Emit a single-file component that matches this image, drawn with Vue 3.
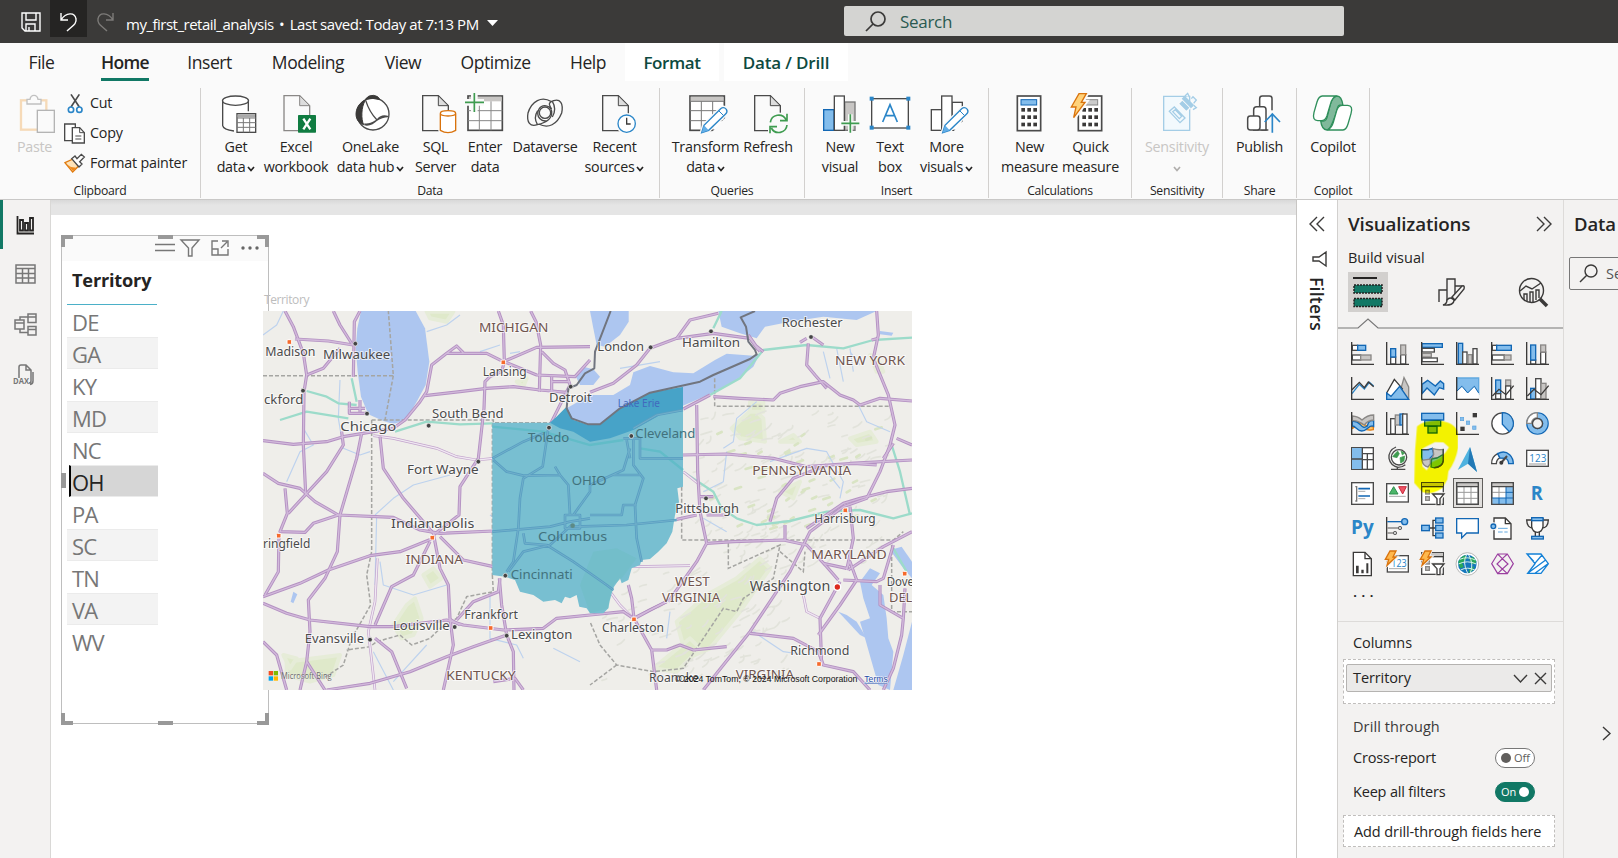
<script setup>
const D = '#4a4a4a', B = '#2b86c8', L = '#83bdec', G = '#3f9c50', K = '#3b3a39', N = '#1267b4', S = '#c8c6c4'

const docPath = (x) => `<path d="M${x} 8H${x + 47}L${x + 77} 38V113H${x}z" fill="#fafafa" stroke="${D}" stroke-width="4"/><path d="M${x + 47} 8V38H${x + 77}z" fill="#ddd" stroke="${D}" stroke-width="3"/>`
const pencil = `<path d="M47 119L54 97 104 47Q113 40 121 49 126 57 118 64L68 112z" fill="#fff" stroke="#fafafa" stroke-width="12"/><path d="M47 119L54 97 104 47Q113 40 121 49 126 57 118 64L68 112z" fill="#fff" stroke="${B}" stroke-width="4"/><path d="M47 119L54 97 68 112z" fill="#62aee8"/><path d="M98 53L112 67" stroke="${B}" stroke-width="3"/>`
const keys = [45, 67, 89].map(y => [34, 52, 70].map(x => `<rect x="${x}" y="${y}" width="11" height="11" fill="${K}"/>`).join('')).join('')
const calc = (hue, line) => `<rect x="22" y="9" width="70" height="104" fill="#fff" stroke="${D}" stroke-width="5"/><rect x="33" y="20" width="47" height="16" fill="${hue}" stroke="${line}" stroke-width="3"/>${keys}`
const bolt = (t = '') => `<path ${t} d="M24 2H46L31 28H42L8 74 15 42H1z" fill="#ffd27a" stroke="#d9730d" stroke-width="4"/>`

const ribbonIcons = {
  paste: `<g opacity=".38"><rect x="9" y="22" width="76" height="88" fill="#fff" stroke="#f0a950" stroke-width="7"/><path d="M27 33V19H36Q38 7 48 7T60 19H69V33z" fill="#fff" stroke="#666" stroke-width="4"/></g><rect x="58" y="52" width="51" height="66" fill="#fafafa" stroke="#b4b4b4" stroke-width="4"/>`,
  getdata: `<path d="M20 24V98Q22 112 60 114V60H98V24" fill="#fff"/><path d="M20 24V98Q22 110 54 114M97 24V55" fill="none" stroke="${D}" stroke-width="4"/><ellipse cx="58.500" cy="23" rx="39" ry="14" fill="#fff" stroke="${D}" stroke-width="4"/><rect x="63" y="62" width="56" height="56" fill="#fff" stroke="${D}" stroke-width="4"/><rect x="65" y="64" width="52" height="9" fill="#aaa"/><path d="M63 75H119M63 89H119M63 103H119M82 75V118M101 75V118" stroke="#777" stroke-width="3"/>`,
  excel: `${docPath(24).replaceAll(D, '#8a8886')}<rect x="66" y="66" width="54" height="53" fill="#107c41" rx="2"/><path d="M82 77L103 109M103 77L82 109" stroke="#fff" stroke-width="7"/>`,
  onelake: `<circle cx="66" cy="63" r="48" fill="#fff" stroke="${D}" stroke-width="4"/><path d="M43 19Q52 6 67 7 82 8 87 20 66 13 43 19z" fill="${K}" stroke="${K}" stroke-width="3"/><path d="M43 22C12 32 2 84 38 95 30 80 30 42 43 22z" fill="${K}" stroke="${K}" stroke-width="3"/><path d="M44 22Q55 57 78 81M40 93C68 99 78 70 112 71M40 95Q60 100 80 79 92 64 112 71" fill="none" stroke="${D}" stroke-width="4"/>`,
  sql: `${docPath(20)}<path d="M73 62V112Q96 126 119 112V62" fill="#fff" stroke="#fafafa" stroke-width="12"/><path d="M73 62V112Q96 126 119 112V62" fill="#fff" stroke="#d9730d" stroke-width="4"/><ellipse cx="96" cy="61" rx="23" ry="8" fill="#fff" stroke="#d9730d" stroke-width="4"/>`,
  enter: `<rect x="9" y="9" width="103" height="103" fill="#fff" stroke="${D}" stroke-width="5"/><rect x="12" y="11" width="98" height="14" fill="#c8c6c4"/><path d="M9 53H112M9 83H112M43 25V112M78 25V112" stroke="#888" stroke-width="3"/><path d="M0 28H57M28 0V57" stroke="#fafafa" stroke-width="20"/><path d="M0 28H57M28 0V57" stroke="${G}" stroke-width="5"/>`,
  dataverse: `<g fill="none" stroke="${D}" stroke-width="4"><circle cx="60" cy="59" r="17"/><path d="M79 26C50 8 20 24 9 60 4 88 16 103 37 95 68 88 82 75 80 55 77 35 51 33 42 48 30 72 51 88 68 83M41 93C70 108 96 95 110 60 116 30 105 17 86 23 70 29 70 33 80 48"/><path d="M37 94Q25 74 38 53M82 25Q96 48 82 72"/></g>`,
  recent: `${docPath(23)}<circle cx="95" cy="92" r="32" fill="#fafafa"/><circle cx="95" cy="92" r="26" fill="#fff" stroke="${B}" stroke-width="4"/><path d="M95 74V93H107" fill="none" stroke="${K}" stroke-width="4"/>`,
  transform: `<rect x="12" y="9" width="103" height="103" fill="#fff" stroke="${D}" stroke-width="5"/><rect x="14" y="11" width="98" height="14" fill="#c8c6c4"/><path d="M12 25H115M12 53H115M12 83H115M46 25V112M80 25V112" stroke="#777" stroke-width="3"/><path d="M75 120L122 70V120z" fill="#fafafa"/>${pencil}`,
  refresh: `${docPath(20)}<rect x="60" y="59" width="64" height="62" fill="#fafafa"/><path d="M67 88A25 25 0 0 1 114 80M117 96A25 25 0 0 1 70 105M117 62V83H96M66 121V101H87" fill="none" stroke="${G}" stroke-width="5"/>`,
  newvisual: `<rect x="11" y="50" width="31" height="62" fill="${L}" stroke="${N}" stroke-width="4"/><rect x="74" y="27" width="31" height="85" fill="#c8c6c4" stroke="#777" stroke-width="4"/><rect x="43" y="9" width="30" height="103" fill="#fff" stroke="${D}" stroke-width="4"/><path d="M64 91H118M91 64V119" stroke="#fafafa" stroke-width="14"/><path d="M64 91H118M91 64V119" stroke="${G}" stroke-width="5"/>`,
  textbox: `<rect x="5" y="17" width="110" height="88" fill="#fff" stroke="${D}" stroke-width="4"/><g fill="${B}"><rect x="-1" y="11" width="12" height="12"/><rect x="109" y="11" width="12" height="12"/><rect x="-1" y="98" width="12" height="12"/><rect x="109" y="98" width="12" height="12"/></g><path d="M38 87L60 35 82 87M46 68H74" fill="none" stroke="${B}" stroke-width="5"/>`,
  morevisuals: `<g fill="#fff" stroke="${D}" stroke-width="4"><rect x="13" y="50" width="31" height="62"/><rect x="75" y="28" width="31" height="84"/><rect x="44" y="9" width="31" height="103"/></g><path d="M75 120L116 75V120z" fill="#fafafa"/>${pencil}`,
  newmeasure: calc(L, N),
  quick: `${calc('#ccc', '#888')}<path d="M24 2H46L31 28H42L8 74 15 42H1z" stroke="#fafafa" stroke-width="15"/>${bolt()}`,
  sensitivity: `<g stroke="#a4cde6" fill="#f2f9fd" stroke-width="4"><path d="M20 10H98V112H20z"/><path d="M64 32L76 20 100 44 88 56z" fill="#a4cde6" stroke="#fafafa"/><path d="M77 17L83 11 109 37 102 43z" fill="#a4cde6"/><path d="M84 9L92 1 97 12M103 17L108 11 118 21 110 31M110 37L118 44 108 50"/><path d="M37 55L52 42 84 75 69 89zM47 56L55 50 74 70 67 77z"/></g>`,
  publish: `<g fill="#fff" stroke="${D}" stroke-width="4.500"><rect x="59" y="9" width="37" height="102" rx="8"/><path d="M41 111V50Q41 41 50 41H70Q78 41 78 50V111z"/><rect x="23" y="69" width="37" height="42" rx="8"/></g><path d="M97 52V122" stroke="#fafafa" stroke-width="24"/><path d="M97 119V62M74 87L97 63 120 87" fill="none" stroke="${B}" stroke-width="5"/>`,
  copilot: `<g stroke="#2f8f5b" stroke-width="4" stroke-linejoin="round"><path d="M72 9Q86 9 90 38Q78 33 74 43L66 70C57 96 50 111 42 111Q26 110 23 83Q38 88 42 74L52 34Q58 10 72 9z" fill="#80b99b"/><path d="M28 9H70Q58 13 52 34L42 68Q37 83 25 83H14Q-3 83 3 58L12 27Q17 10 28 9z" fill="#fff"/><path d="M90 111H44Q56 105 61 88L72 50Q77 37 88 37H104Q121 38 114 62L105 93Q100 110 90 111z" fill="#fff"/></g>`
}

const clip = [
  { t: 'Cut', i: `<path d="M12 4L37 42M37 4L12 42" stroke="${D}" stroke-width="5"/><circle cx="12" cy="50" r="8" fill="#fff" stroke="${B}" stroke-width="5"/><circle cx="37" cy="50" r="8" fill="#fff" stroke="${B}" stroke-width="5"/>` },
  { t: 'Copy', i: `<path d="M-7 3H25V53H-7z" fill="#fff" stroke="${D}" stroke-width="4"/><path d="M16 14H38L52 29V60H16z" fill="#fff" stroke="${D}" stroke-width="4"/><path d="M38 14V29H52M25 39H43M25 48H43" fill="none" stroke="${D}" stroke-width="3"/>` },
  { t: 'Format painter', i: `<path d="M-6 29L18 18 34 40 17 57z" fill="#ffe3b8" stroke="#e07b10" stroke-width="4"/><path d="M2 35L12 42 28 44 18 54z" fill="#f08a1c"/><path d="M14 17L24 9 30 17 43 4 52 12 38 26 45 33 36 42z" fill="#fff" stroke="${D}" stroke-width="4"/>` }
]

const groups = [
  { name: 'Data', w: 459, pad: 10, b: [['getdata', 'Get', 'data', 50, 1], ['excel', 'Excel', 'workbook', 70], ['onelake', 'OneLake', 'data hub', 79, 1], ['sql', 'SQL', 'Server', 51], ['enter', 'Enter', 'data', 48], ['dataverse', 'Dataverse', '', 72], ['recent', 'Recent', 'sources', 67, 1]] },
  { name: 'Queries', w: 145, pad: 11, b: [['transform', 'Transform', 'data', 69, 1], ['refresh', 'Refresh', '', 56]] },
  { name: 'Insert', w: 184, pad: 10, b: [['newvisual', 'New', 'visual', 50], ['textbox', 'Text', 'box', 50], ['morevisuals', 'More', 'visuals', 63, 1]] },
  { name: 'Calculations', w: 143, pad: 9, b: [['newmeasure', 'New', 'measure', 63], ['quick', 'Quick', 'measure', 59]] },
  { name: 'Sensitivity', w: 91, pad: 0, off: true, b: [['sensitivity', 'Sensitivity', '', 90, 1]] },
  { name: 'Share', w: 74, pad: 0, b: [['publish', 'Publish', '', 73]] },
  { name: 'Copilot', w: 73, pad: 0, b: [['copilot', 'Copilot', '', 72]] }
]

const tabs = [['File', 28, 27], ['Home', 101, 48], ['Insert', 188, 43], ['Modeling', 271, 74], ['View', 384, 38], ['Optimize', 460, 71], ['Help', 570, 36]]
  .map(([t, x, w], i, a) => ({ t, w, gap: i ? x - a[i - 1][1] - a[i - 1][2] : x }))

const rows = ['DE', 'GA', 'KY', 'MD', 'NC', 'OH', 'PA', 'SC', 'TN', 'VA', 'WV']

// Visual gallery glyphs, drawn on a 69-unit square
const ax = `<path d="M2 0V67H69" fill="none" stroke="${K}" stroke-width="4"/>`
const r = (x, y, w, h, k) => `<rect x="${x}" y="${y}" width="${w}" height="${h}" fill="${{ b: L, g: S, w: '#fff' }[k]}" stroke="${{ b: N, g: '#8a8886', w: D }[k]}" stroke-width="4"/>`
const p = (d, c = K, f = 'none', w = 4) => `<path d="${d}" fill="${f}" stroke="${c}" stroke-width="${w}"/>`
const grid = (hd) => r(2, 2, 65, 65, 'w') + p('M2 31H67M2 49H67M24 14V67M45 14V67', '#999', 'none', 3) + `<rect x="4" y="4" width="61" height="9" fill="${hd}"/>` + p('M2 2H67V67H2zM2 14H67', D)
const matrix = r(2, 2, 65, 65, 'w') + `<rect x="4" y="4" width="61" height="9" fill="${S}"/><path d="M45 15H66V66H4V48H45z" fill="${L}"/>` + p('M2 31H45M24 14V48', '#999', 'none', 3) + p('M45 14V67M45 31H67M3 48H67M24 48V67', N, 'none', 3) + p('M2 2H67V67H2zM2 14H67', D)
const funnelF = p('M36 36H70L57 51V67H49V51z', '#f3f2f1', '#f3f2f1', 10) + p('M35 36H69L57 50V68H48V50z', K, '#fff')
const slicer = r(2, 2, 65, 65, 'w') + `<rect x="3" y="3" width="63" height="9" fill="${S}"/>` + p('M2 14H67') + r(14, 25, 11, 11, 'g') + r(14, 44, 11, 11, 'g') + funnelF
const sBolt = `<path d="M12 -3H30L21 15H30L3 40 8 22H-2z" fill="#ffb84d" stroke="#f3f2f1" stroke-width="9"/><path d="M12 -3H30L21 15H30L3 40 8 22H-2z" fill="#ffb84d" stroke="#d9730d" stroke-width="4"/>`
const t = (s, x, y, size, len, wt = 400) => `<text x="${x}" y="${y}" font-size="${size}" textLength="${len}" lengthAdjust="spacingAndGlyphs" fill="${B}" font-weight="${wt}">${s}</text>`
const gallery = [
  r(4, 10, 16, 15, 'w') + r(20, 10, 24, 15, 'b') + r(4, 39, 25, 15, 'w') + r(29, 39, 31, 15, 'g') + ax,
  r(14, 45, 15, 21, 'w') + r(14, 20, 15, 25, 'b') + r(44, 38, 15, 28, 'w') + r(44, 9, 15, 29, 'g') + ax,
  r(3, 5, 61, 11, 'b') + r(3, 19, 37, 11, 'w') + r(3, 34, 28, 11, 'g') + r(3, 48, 46, 11, 'w') + ax,
  r(7, 4, 13, 62, 'b') + r(20, 30, 13, 36, 'w') + r(36, 38, 12, 28, 'g') + r(51, 20, 12, 46, 'w') + ax,
  r(4, 10, 13, 15, 'w') + r(17, 10, 44, 15, 'b') + r(4, 39, 36, 15, 'w') + r(40, 39, 20, 15, 'g') + ax,
  r(14, 54, 15, 12, 'w') + r(14, 9, 15, 45, 'b') + r(44, 30, 15, 36, 'w') + r(44, 9, 15, 21, 'g') + ax,
  p('M3 50L25 22 40 36 55 16 68 27', B) + p('M3 38L25 16 40 32 52 15 68 29', K) + ax,
  p('M36 67L54 2 68 30V67z', '#8a8886', S) + p('M2 48L25 7 49 35 20 67 2 67z', K, '#fff') + p('M2 67V48L15 58 41 28 68 67z', N, L),
  p('M3 22L20 10 43 27 58 12 68 20V36L55 32 40 54 18 33 3 50z', N, L) + ax,
  p('M3 3H68V48L55 28 35 48 18 28 3 42z', '#62a9e0', L) + p('M3 42L18 28 35 48 55 28 68 48V66H3z', '#fff', '#fff', 0) + p('M3 42L18 28 35 48 55 28 68 48', N, 'none', 3) + ax,
  r(14, 9, 15, 41, 'b') + r(14, 50, 15, 16, 'w') + r(44, 9, 15, 18, 'g') + r(44, 27, 15, 39, 'w') + p('M4 57L24 37 45 53 68 26') + ax,
  r(14, 34, 15, 32, 'b') + r(29, 5, 16, 61, 'w') + r(45, 19, 15, 47, 'g') + p('M4 57L24 37 45 53 68 26') + ax,
  p('M4 49C24 35 38 61 67 53V43C45 50 28 20 4 35z', '#e07b10', '#ffc56b') + p('M4 28C30 24 30 57 49 42 54 22 64 26 68 27V43C55 35 50 57 32 57 18 57 15 42 4 42z', N, L) + p('M4 12Q21 13 33 24 49 9 68 9V24Q51 25 40 39 20 24 4 26z', '#8a8886', S) + ax,
  r(14, 20, 14, 46, 'w') + r(28, 9, 14, 30, 'g') + r(42, 6, 10, 33, 'b') + r(50, 6, 13, 60, 'w') + ax,
  r(2, 4, 66, 20, 'b') + r(11, 25, 48, 17, 'b') + r(21, 43, 27, 20, 'b') + '',
  `<rect x="50" y="3" width="13" height="13" fill="${K}"/><rect x="13" y="44" width="13" height="13" fill="${K}"/>` + [[13, 16], [31, 27], [50, 42]].map(a => `<rect x="${a[0]}" y="${a[1]}" width="10" height="10" fill="${L}" stroke="#5ba2dd" stroke-width="2"/>`).join('') + ax,
  `<circle cx="34.500" cy="34.500" r="32" fill="#fff" stroke="${D}" stroke-width="4"/>` + p('M34 2A32 32 0 0 1 55 59L34 37z', N, L),
  `<circle cx="34.500" cy="34.500" r="24" fill="none" stroke="${N}" stroke-width="20"/><circle cx="34.500" cy="34.500" r="24" fill="none" stroke="${L}" stroke-width="13"/>` + p('M34 2V17A17 17 0 0 0 17 34H2A32 32 0 0 1 34 2z', '#8a8886', '#fff') + `<circle cx="34.500" cy="34.500" r="15" fill="#f3f2f1" stroke="${D}" stroke-width="4"/>`,
  r(2, 2, 65, 65, 'w') + `<rect x="3" y="3" width="30" height="63" fill="${L}"/>` + p('M34 3V67M3 36H33M34 20H67M49 38V67M34 38H67M49 20V38', D),
  `<circle cx="39" cy="31" r="23" fill="#fff" stroke="${D}" stroke-width="4"/>` + p('M26 21L35 12 40 20 33 32 20 29zM42 32L56 27 54 42 44 48zM45 12L56 18 49 24z', G, G, 2) + p('M30 0Q7 10 9 34 13 55 36 61 48 61 58 53M34 61V67M15 67H58', D),
  p('M2 8Q22 10 34 4L38 22 27 34V43H8Q2 40 2 30z', N, L) + p('M36 5Q51 10 67 7V30L33 34 38 22z', '#8a8886', S) + p('M3 40L28 36V50L21 60Q5 56 3 40z', '#8a8886', S) + p('M67 7V22L48 33 32 36 30 60Q44 66 58 56 68 50 67 34z', '#2b7d3a', '#7ec78b') + p('M67 7V40Q65 60 40 62M2 8H24', D),
  `<path d="M42 0L5 69 36 50 63 75z" fill="#4fb2df"/><path d="M42 0L36 50 63 75z" fill="#2279b5"/>`,
  p('M2 50A32 32 0 0 1 20 20L27 32Q16 38 16 50z', D, '#fff') + p('M20 20Q40 9 56 23 67 34 67 50H53Q52 37 43 34L27 33z', N, L) + p('M30 48L48 27', D, 'none', 6) + `<circle cx="31" cy="47" r="6" fill="${K}"/>`,
  r(2, 10, 65, 48, 'w') + t('123', 10, 46, 35, 51) + p('M9 51H60', '#999', 'none', 3),
  r(2, 2, 65, 65, 'w') + p('M17 12V59M13 14H18M13 57H18', '#777') + p('M22 20H57M22 42H57', N, 'none', 5) + p('M22 28H43M22 50H43', '#aaa', 'none', 3),
  r(2, 5, 65, 55, 'w') + p('M10 36L23 14 36 36z', '#2f8d4d', '#4bb76a', 3) + p('M38 14H61L50 36z', '#c8293c', '#ef5666', 3) + p('M9 43H59', '#aaa', 'none', 3),
  slicer,
  grid(S),
  matrix,
  t('R', 14, 55, 60, 36, 700),
  t('Py', 0, 51, 58, 68, 700),
  ax + p('M4 14H50', N) + `<circle cx="56" cy="14" r="9" fill="${L}" stroke="${N}" stroke-width="4"/>` + p('M4 33H40M4 48H24', '#8a8886') + `<circle cx="42" cy="33" r="5" fill="#ccc" stroke="#666" stroke-width="3"/><circle cx="27" cy="48" r="5" fill="#ccc" stroke="#666" stroke-width="3"/>`,
  p('M25 33H40M44 10H36V56H44M36 33H44') + r(2, 25, 23, 16, 'b') + r(44, 3, 22, 15, 'b') + r(44, 25, 22, 16, 'b') + r(44, 48, 22, 15, 'b'),
  p('M2 5H67V48H32L17 63V48H2z', N, '#fff'),
  p('M9 3H43L60 20V66H9z', K, '#fff') + p('M43 3V20H60') + `<circle cx="7" cy="28" r="12" fill="#f3f2f1"/><circle cx="7" cy="28" r="7" fill="${L}" stroke="${N}" stroke-width="4"/>` + p('M21 34H50M21 45H35M40 45H50', '#62a9e0', 'none', 3),
  p('M17 9H2Q3 34 22 33M52 9H67Q66 34 47 33M28 45V59M40 45V59M20 61H49') + p('M17 5V29Q20 46 34 46T51 29V5z', K, '#fff') + r(17, 2, 34, 9, 'b') + r(17, 58, 35, 8, 'b'),
  p('M7 1H42L61 20V71H7z', K, '#fff') + p('M42 1V20H61', K) + `<path d="M15 41H23V64H15zM31 53H38V64H31zM46 34H52V64H46z" fill="${K}"/>`,
  r(4, 11, 63, 49, 'w') + t('123', 16, 44, 31, 46) + p('M9 50H60', '#aaa', 'none', 3) + sBolt,
  slicer + sBolt,
  `<circle cx="34" cy="36" r="34" fill="#fff" stroke="#b8b8b8" stroke-width="3"/><circle cx="34" cy="36" r="28" fill="#1677bc"/><path d="M7 31Q13 14 27 10L33 18 19 34 23 45 13 49zM51 14L61 28 57 37 45 35 39 20zM41 49L55 43 49 57 37 63z" fill="#28a85a"/><path d="M7 36Q34 23 61 36M11 22Q35 12 58 24M14 54Q35 43 56 54M32 8Q18 30 35 64M38 9Q54 35 43 63" stroke="#d7f0e6" stroke-width="3" fill="none"/>`,
  p('M20 6H49L67 35 49 65H20L2 35zM20 6L34 20 18 36 34 51 20 65M49 6L34 20 51 36 34 51 49 65', '#9b3fa0', 'none', 3.500),
  p('M3 6H45L67 35 45 64H5L27 35zM3 6L24 29M26 35L48 9M5 64L59 24M27 64L65 36', '#1481d6', '#fff')
]

// Map geometry in thirds of a pixel
const roads = ['M75 78L100 125 130 205 140 270 132 320 130 480 137 625', 'M105 162L205 168 280 180', 'M220 78L240 120 278 180', 'M300 78L283 110 280 275', 'M140 270L190 250 240 190', 'M9 467L100 478 200 470 250 455 340 440 400 430 435 405 480 350 500 320 515 240 560 205 590 183 610 203M560 205L680 205 730 230 830 187 990 185', 'M715 78L730 120 733 230 725 260 690 275 675 290 672 370 655 520 600 605 597 690 520 750', 'M495 332L600 320 680 310 760 305 840 315 920 322', 'M812 78L828 110 842 180 838 320', 'M845 200L880 235 915 255 930 300 905 350 870 420', 'M733 230L830 270 945 275 990 225', 'M875 275V320M875 290H930', 'M360 455L370 550 430 640 520 745 540 850 565 900 570 1000 580 1080 550 1215', 'M305 445L290 520 240 690 232 800 195 880 145 945 150 1040 140 1130 120 1215', 'M9 565L55 595 120 610 165 650 235 690 400 697 480 735 540 745 700 738', 'M75 610L82 685 60 740 135 742 160 715 235 690', 'M57 750L55 860 15 930', 'M85 685L200 560 250 480 245 440', 'M9 935L120 895 205 855 330 812 420 800 520 760', 'M9 955L80 985 150 1005 330 1025 400 1025 560 1005 610 1020 730 1035 850 1030 890 1000 990 990 1090 980 1120 1000 1170 975 1220 950', 'M345 1060L395 1100 440 1210', 'M9 1070L50 1110 80 1215', 'M140 1130L195 1215', 'M345 1020L395 905 460 870 510 770', 'M540 755L610 825 700 845', 'M720 880L715 920 640 950 590 1005', 'M718 880L725 960 740 1050 760 1100 762 1215', 'M740 1050L640 1085 560 1115 450 1160 330 1195 200 1215', 'M565 1000L600 1020M790 1215L765 1180 700 1190', 'M268 350V385H320M265 370H315M300 345L300 380', 'M1310 360L1313 560 1320 680 1340 775 1310 830 1225 950', 'M1269 510L1400 507 1540 520 1640 545 1780 535 1850 540M1770 535L1956 525', 'M1340 775L1420 770 1570 765 1640 780 1700 845 1735 885', 'M1360 335L1440 340 1540 345 1560 325 1620 305 1690 290 1740 330 1780 345 1800 360 1860 340 1956 348', 'M1850 78L1855 150 1840 220 1885 330 1905 420 1890 480 1860 560 1820 640 1750 665 1650 740 1630 780 1590 860 1550 920 1470 1040 1390 1140 1330 1215', 'M1645 175L1640 240 1665 270 1700 310', 'M1530 710L1550 640 1600 580 1700 540', 'M1770 665L1780 760 1760 855', 'M1470 1045L1600 1060 1675 1100 1690 1140 1780 1160 1830 1215', 'M1175 1095L1220 1095 1260 1080 1300 1095 1400 1085', 'M1765 855L1870 785 1956 740', 'M1750 885L1850 890 1870 880 1900 780', 'M1860 900V960L1930 1000 1925 1050 1900 1150 1870 1215M1930 1000L1935 910', 'M1640 730L1750 655 1800 640 1880 620 1956 610', 'M1575 720V765M1340 690L1400 690M1310 690L1250 703', 'M1105 900L1115 940 1122 1000 1175 1095 1190 1215', 'M1125 1000L1170 975 1220 950', 'M990 322L1060 295 1130 240 1170 190 1250 160 1360 145 1470 160 1495 195', 'M1250 160L1290 105 1375 85', 'M1465 150L1500 200M1485 180L1510 200', 'M1350 330L1270 372', 'M1640 160L1620 172M1655 155L1690 180M1855 160L1835 165M1320 635H1360', 'M1910 460L1956 480M1870 520L1900 475', 'M1685 1140L1680 1000 1740 890', 'M1690 835L1760 850 1770 830 1790 885 1740 960 1675 1050']
const thin = ['M340 452L400 460 530 490 590 515 650 525 700 520', 'M352 820L345 950 325 1040 345 1215', 'M1120 845L1290 842', 'M1270 560L1320 600', 'M1630 930L1640 980 1680 1000', 'M1050 920L1080 960 1120 1000']
const ohioRoads = ['M697 520L790 470 850 445M700 525L740 560 790 572 900 570 925 600 930 690M885 545L900 570M865 430L848 545 790 580 780 640 775 730 760 830 740 860M697 740L870 725 930 710 990 700M945 725L1100 720 1250 705M935 720L870 780 790 800 745 860M790 745L795 775 860 780 940 830 1040 900 1060 915M940 690L990 620 990 600 1090 555 1110 490M1090 460H1140V520H1269M1100 465L1110 520M1120 465V540L1150 580 1125 660 1130 760 1145 830M1269 375L1190 390 1120 430M1060 570H1140M990 690L1085 690 1090 660 1130 660M915 690H960V730H915z']
const teal = ['M140 318L200 335 235 355 290 360M60 405L140 380 265 400M275 280L290 350', 'M405 440L500 410 600 418 697 415', 'M1269 560L1360 620 1385 670 1430 700 1490 720 1590 708 1700 680 1800 675 1900 700 1956 685', 'M1350 330L1440 280 1510 195 1640 180 1750 190 1840 165 1956 158', 'M1895 480L1920 560 1950 690', 'M1900 790L1940 860M1360 130L1385 78']
const rivers = ['M9 150L50 120 70 78M240 285L235 400 250 490 300 510 330 500M130 430L160 480 120 500 80 590M345 690L400 640 460 600 570 570', 'M350 690L345 900M560 900L460 930 370 900 360 830M690 930V1060L770 1080 790 1120M400 1190L500 1080M340 1100L400 1215', 'M1490 350L1430 400 1420 470 1390 490M1400 500L1390 590 1330 620M1330 700L1400 740M1530 530L1640 490 1700 500 1750 590 1740 640', 'M1620 540L1700 560 1740 610M1790 350L1820 410 1890 440M1480 1040L1570 1100 1640 1110M1230 980L1220 1060M1080 250L1200 230', 'M500 140L560 120 600 90M660 200L720 180M750 205L780 200M690 690L720 710M880 1090L960 1130M1690 200L1710 280M1730 190L1750 290M1770 190L1780 260M1770 200L1800 240']
const borders = ['M9 272H400L385 78M400 272L375 405M335 405H700V413H870', 'M335 405V800L320 870 332 960 275 1060 250 1140 190 1180', 'M697 413V870', 'M697 870L700 920 620 935 590 1000 540 1030 510 1060 455 1080 420 1050 350 1070 330 1085 260 1095', 'M1265 605V765H1900L1930 740', 'M1364 280V364H1890', 'M1405 775V850L1560 780 1540 880 1450 940 1430 980 1390 970 1330 1060 1270 1150 1180 1160 1070 1140 1020 1080 990 1010', 'M1560 800L1630 860 1635 800M1895 780V980H1956', 'M1070 1140L990 1200']
// text, x, baseline, length, size, kind
const labels = [['Madison', 16, 214, 150], ['Milwaukee', 189, 222, 202], ['MICHIGAN', 657, 140, 208, 39, 's'], ['Lansing', 668, 273, 132], ['Detroit', 867, 352, 128], ['ckford', 12, 358, 118], ['Chicago', 241, 438, 168], ['South Bend', 516, 400, 215], ['Toledo', 804, 472, 124, 37, 'o'], ['Fort Wayne', 441, 568, 215], ['OHIO', 935, 600, 105, 38, 'o'], ['Indianapolis', 393, 728, 250, 40], ['Columbus', 834, 768, 208, 40, 'o'], ['INDIANA', 437, 836, 172, 39, 's'], ['Cincinnati', 752, 882, 186, 37, 'o'], ['ringfield', 9, 790, 142], ['Frankfort', 613, 1001, 161], ['Louisville', 399, 1034, 170], ['Lexington', 753, 1062, 184], ['Evansville', 134, 1074, 178], ['KENTUCKY', 559, 1186, 208, 39, 's'], ['London', 1012, 197, 140], ['Hamilton', 1266, 186, 174], ['Rochester', 1565, 127, 183], ['NEW YORK', 1725, 239, 210, 39, 's'], ['Lake Erie', 1073, 366, 127, 30, 'w'], ['Cleveland', 1126, 460, 180, 37, 'o'], ['PENNSYLVANIA', 1477, 571, 297, 39, 's'], ['Pittsburgh', 1246, 683, 191], ['Harrisburg', 1663, 715, 184], ['MARYLAND', 1654, 823, 226, 39, 's'], ['WEST', 1245, 904, 104, 39, 's'], ['VIRGINIA', 1206, 952, 175, 39, 's'], ['Washington', 1469, 919, 242, 42], ['Dove', 1880, 902, 82], ['DEL', 1887, 952, 70, 39, 's'], ['Charleston', 1026, 1040, 186], ['Richmond', 1591, 1110, 177], ['VIRGINIA', 1427, 1182, 175, 39, 's'], ['Roanoke', 1167, 1190, 150]]
const dots = [[286, 176], [129, 317], [321, 386], [506, 422], [932, 305], [655, 530], [736, 872], [584, 1026], [740, 1052], [330, 1064], [1172, 187], [1353, 139], [1653, 156], [1338, 640], [867, 428], [1114, 453]]
const capitals = [[88, 171], [730, 232], [56, 752], [517, 758], [692, 1029], [1122, 1003], [1756, 676], [1934, 866], [1677, 1137]]
const greens = ['M440 960L465 940 485 1000 460 1050 425 1060 400 1020z', 'M80 1130L240 1110 220 1170 150 1190 80 1170z', 'M490 870L520 850 545 880 510 905z', 'M1415 430L1480 370 1510 400 1515 470 1440 460z', 'M1250 1010L1340 930 1430 880 1500 820 1530 850 1440 980 1350 1090 1280 1120z', 'M1470 350H1510V380H1470z', 'M500 80H580L560 110 510 100z', 'M1770 460L1830 440 1850 470 1790 480z', 'M1560 470L1600 450 1620 470z', 'M1560 620L1620 590 1600 640z', 'M1830 210L1850 215 1870 260 1850 260z', 'M770 290L800 280 790 305z', 'M70 1110L110 1120 90 1150z', 'M1180 1150L1290 1060 1320 1090 1250 1160z']
const waters = ['M303 78H467L495 130 508 230 497 300 470 350 450 385 430 408 400 417 370 408 325 388 303 335 293 260 287 190 292 130z', 'M945 270L970 245 1000 253 1020 275 1000 300 960 300z', 'M990 78H1106V110L1080 150 1035 185 1010 180 1000 130z', 'M920 370L990 330 1060 330 1110 300 1120 262 1170 243 1240 262 1300 265 1365 225 1400 206 1480 212 1500 205 1480 245 1430 285 1370 318 1269 362 1269 306 1170 323 1080 370 1020 418H985L940 405z', 'M1375 78H1850L1790 105 1690 95 1590 110 1515 125 1490 160 1440 145 1385 125z', 'M1830 850L1860 865 1835 900 1870 930 1880 1000 1885 1060 1900 1100 1890 1215 1855 1200 1835 1130 1815 1060 1800 1010 1830 1000 1810 940 1800 890z', 'M1890 795L1925 785 1956 830V880L1930 850z', 'M1956 1010L1930 1110 1900 1215H1956z', 'M1735 980L1760 990 1790 1010 1820 1060 1800 1050z', 'M1860 138L1900 143 1895 152 1860 148z', 'M1690 200L1695 240M100 920L112 928 100 955 92 950z']
// Pseudo-random relief marks over the Appalachians
const rnd = (i) => { const v = Math.sin(i * 12.9898) * 43758.5453; return v - Math.floor(v) }
const hills = Array.from({ length: 230 }, (_, i) => {
  const y = 390 + rnd(i) * 800
  const x = (y > 850 ? 1010 : 1300) + rnd(i + 500) * (y > 850 ? 560 : 580)
  return `M${x.toFixed()} ${y.toFixed()}q${(6 + rnd(i + 9) * 12).toFixed()} -4 ${(10 + rnd(i + 70) * 22).toFixed()} -${(4 + rnd(i + 33) * 18).toFixed()}`
}).join('')
const meadows = Array.from({ length: 50 }, (_, i) => {
  const x = 1310 + rnd(i + 200) * 540, y = 400 + rnd(i + 300) * 340
  return `M${x.toFixed()} ${y.toFixed()}l${(8 + rnd(i) * 12).toFixed()} -6`
}).join('')
</script>

<template>
  <div class="app">
    <header class="titlebar">
      <div class="qa save"><svg width="20" height="20" viewBox="0 0 20 20"><path d="M1 1H19V19H4L1 16zM5 1V8H15V1M5 19V12H14V19M8 19V15" /></svg></div>
      <div class="qa undo"><svg width="18" height="20" viewBox="0 0 18 20"><path d="M1 1V8H8M1 8C6 0 15 0 16 7 17 12 12 14 7 19" /></svg></div>
      <div class="qa redo"><svg width="18" height="20" viewBox="0 0 18 20"><path d="M17 1V8H10M17 8C12 0 3 0 2 7 1 12 6 14 11 19" /></svg></div>
      <div class="doc"><span>my_first_retail_analysis</span><i>•</i><span class="saved">Last saved: Today at 7:13 PM</span><svg width="11" height="6" viewBox="0 0 11 6"><path d="M0 0H11L5.500 6z" fill="#fff" /></svg></div>
      <div class="search"><svg width="21" height="21" viewBox="0 0 21 21"><circle cx="13" cy="8" r="7" /><path d="M8 13L1 20" /></svg><span>Search</span></div>
    </header>

    <nav class="tabs">
      <div v-for="x in tabs" :key="x.t" class="tab" :class="{ active: x.t === 'Home' }" :style="{ width: x.w + 'px', marginLeft: x.gap + 'px' }">{{ x.t }}</div>
      <div class="ctx fmt">Format</div>
      <div class="ctx drill">Data / Drill</div>
    </nav>

    <section class="ribbon">
      <div class="group clipboard">
        <div class="btns">
          <div class="btn off paste"><svg width="40" height="40" viewBox="0 0 120 120" v-html="ribbonIcons.paste"></svg><div>Paste</div></div>
          <div class="small">
            <div v-for="c in clip" :key="c.t"><svg width="19" height="21" viewBox="0 0 57 63" v-html="c.i"></svg><span>{{ c.t }}</span></div>
          </div>
        </div>
        <div class="gname">Clipboard</div>
      </div>
      <div v-for="g in groups" :key="g.name" class="group" :style="{ width: g.w + 'px' }">
        <div class="btns" :style="{ paddingLeft: g.pad + 'px' }">
          <div v-for="b in g.b" :key="b[0]" class="btn" :class="{ off: g.off }" :style="{ width: b[3] + 'px' }">
            <svg width="40" height="40" viewBox="0 0 120 120" v-html="ribbonIcons[b[0]]"></svg>
            <div>{{ b[1] }}</div>
            <div class="l2">{{ b[2] }}<svg v-if="b[4]" class="chev" width="8" height="6" viewBox="0 0 8 6"><path d="M1 1L4 4.500 7 1" /></svg></div>
          </div>
        </div>
        <div class="gname">{{ g.name }}</div>
      </div>
    </section>

    <main class="work">
      <aside class="rail">
        <div class="ri on"><svg width="19" height="19" viewBox="0 0 19 19"><path d="M1.500 0V17.500H18M4 4H7V14.500H4zM9 7H12V14.500H9zM14 2H17V14.500H14z" /></svg></div>
        <div class="ri"><svg width="21" height="20" viewBox="0 0 21 20"><path d="M1 1H20V19H1zM1 4.500H20M1 9.500H20M1 14H20M7.500 4.500V19M13.500 4.500V19" /></svg></div>
        <div class="ri"><svg width="23" height="23" viewBox="0 0 23 23"><path d="M1 7H10V16H1zM1 10H10M14 1H22V9.500H14zM14 4H22M14 13.500H22V22H14zM14 16.500H22M6 7V4H14M6 16V19.500H14" /></svg></div>
        <div class="ri dax"><svg width="22" height="22" viewBox="0 0 22 22"><path d="M6 14V3Q6 1 8 1H13L18 6V17Q18 19 16 19M13 1V6H18M20 8V17Q20 20 17 20.500" /><text x="0" y="20" font-size="8" textLength="16" lengthAdjust="spacingAndGlyphs">DAX</text></svg></div>
      </aside>

      <div class="canvas">
        <div class="page">
          <div class="tvis">
            <div class="vhead">
              <svg width="20" height="9" viewBox="0 0 20 9"><path d="M0 1.500H20M0 7.500H20" /></svg>
              <svg class="fn" width="20" height="18" viewBox="0 0 20 18"><path d="M1 1H19L12 9V17H8.500V9z" /></svg>
              <svg class="fo" width="18" height="16" viewBox="0 0 18 16"><path d="M7 1H1V15H17V9M1 9H7V15M10 8L16 2M11 1H17V7" /></svg>
              <svg class="do" width="18" height="4" viewBox="0 0 18 4"><circle cx="2" cy="2" r="1.700" /><circle cx="9" cy="2" r="1.700" /><circle cx="16" cy="2" r="1.700" /></svg>
            </div>
            <div class="th">Territory</div>
            <div class="rows"><div v-for="(x, i) in rows" :key="x" class="row" :class="{ alt: i % 2, sel: x === 'OH' }">{{ x }}</div></div>
            <svg class="handles" width="208" height="490" viewBox="0 0 208 490"><path d="M0 12V0H12V4H4V12zM97 0H112V4H97zM196 0H208V12H204V4H196zM0 478V490H12V486H4V478zM97 486H112V490H97zM196 490H208V478H204V486H196zM0 238H5V253H0z" /></svg>
          </div>

          <div class="mapvis">
            <div class="mtitle">Territory</div>
            <svg class="map" width="649" height="379" viewBox="9 78 1947 1137" preserveAspectRatio="none">
              <rect x="9" y="78" width="1947" height="1137" fill="#efeeea" />
              <path v-for="d in greens" :key="d" :d="d" fill="#dfe9ca" stroke="#e6ecd8" stroke-width="12" stroke-linejoin="round" />
              <path :d="hills" fill="none" stroke="#e2e3db" stroke-width="5" stroke-linecap="round" />
              <path :d="meadows" fill="none" stroke="#d9e4c4" stroke-width="8" stroke-linecap="round" />
              <path v-for="d in waters" :key="d" :d="d" fill="#adc6f0" />
              <path v-for="d in rivers" :key="d" :d="d" fill="none" stroke="#bdd2ee" stroke-width="3.500" stroke-linejoin="round" />
              <path v-for="d in borders" :key="d" :d="d" fill="none" stroke="#a5a5a2" stroke-width="4.500" stroke-dasharray="12 6" />
              <g fill="none" stroke-linejoin="round">
                <path v-for="d in teal" :key="d" :d="d" stroke="#9cdbca" stroke-width="7" />
                <path v-for="d in thin" :key="d" :d="d" stroke="#c3a3cd" stroke-width="8" />
                <path v-for="d in thin" :key="'i' + d" :d="d" stroke="#f0e9f2" stroke-width="4" />
                <path v-for="d in roads" :key="d" :d="d" stroke="#b491c2" stroke-width="9.500" />
                <path v-for="d in roads" :key="'i' + d" :d="d" stroke="#d2badb" stroke-width="4" />
              </g>
              <path d="M697 413H870L890 395 920 365 940 405 985 420H1020L1080 370 1170 323 1269 306V605L1252 610 1257 650 1245 690 1237 740 1220 775 1195 800 1170 822 1145 825 1140 840 1115 850 1105 885 1085 895 1080 880 1062 905 1055 925 1048 950 1045 970 1030 985H990L980 970 958 965 950 930 930 940 915 935 905 955 885 945 850 950 820 930 780 920 765 885 735 875 697 870z" fill="#78bfd1" />
              <path d="M960 900L1000 800 1070 790 1130 820 1085 880 1060 900 1045 970 990 985z" fill="#6cbfc1" opacity=".4" />
              <path d="M870 413L890 395 920 365 940 405 985 420H1020L1080 370 1170 323 1269 306V378L1200 390 1120 435 1050 460 990 470 940 440 900 430z" fill="#47a3c8" />
              <path d="M697 425L850 440 990 480 1090 465M1140 490L1200 500 1269 555" fill="none" stroke="#62bcc8" stroke-width="7" />
              <g fill="none" stroke-linejoin="round"><path v-for="d in ohioRoads" :key="d" :d="d" stroke="#5a9fc2" stroke-width="8" /><path v-for="d in ohioRoads" :key="'i' + d" :d="d" stroke="#70b0cb" stroke-width="3" /></g>
              <path d="M1485 78L1442 97 1458 125 1465 170 1485 195 1490 208 1470 222 1360 270 1320 290 1170 323 1080 370 1020 418H985L935 400 920 370 925 310 950 300 975 265 1003 250 1005 200 1052 78" fill="none" stroke="#71757f" stroke-width="6" stroke-linejoin="round" />
              <circle v-for="d in dots" :key="d[0]" :cx="d[0]" :cy="d[1]" r="7" fill="#444" stroke="#fff" stroke-opacity=".6" stroke-width="3" />
              <rect v-for="d in capitals" :key="d[0]" :x="d[0] - 7" :y="d[1] - 7" width="14" height="14" rx="3" fill="#f56a2c" stroke="#fff" stroke-width="3" />
              <circle cx="938" cy="722" r="7" fill="#5d8a86" />
              <circle cx="1732" cy="906" r="10" fill="#dc2a1e" stroke="#fff" stroke-width="4" />
              <text v-for="(l, i) in labels" :key="i" :x="l[1]" :y="l[2]" :textLength="l[3]" :font-size="l[4] || 38" lengthAdjust="spacingAndGlyphs" class="ml" :class="l[5]">{{ l[0] }}</text>
              <path d="M26 1158H39V1171H26z" fill="#f25022" /><path d="M41 1158H54V1171H41z" fill="#7fba00" /><path d="M26 1174H39V1187H26z" fill="#00a4ef" /><path d="M41 1174H54V1187H41z" fill="#ffb900" />
              <text x="63" y="1182" textLength="152" lengthAdjust="spacingAndGlyphs" font-size="25" class="bing">Microsoft Bing</text>
              <text x="1245" y="1190" textLength="547" lengthAdjust="spacingAndGlyphs" class="copy">© 2024 TomTom, © 2024 Microsoft Corporation</text>
              <text x="1813" y="1190" textLength="70" lengthAdjust="spacingAndGlyphs" class="copy terms">Terms</text>
            </svg>
          </div>
        </div>
      </div>

      <aside class="filters">
        <svg width="16" height="16" viewBox="0 0 16 16"><path d="M8 1L1 8 8 15M15 1L8 8 15 15" /></svg>
        <svg class="ff" width="15" height="16" viewBox="0 0 15 16"><path d="M14 1V15L7 10H1V6H7z" /></svg>
        <span>Filters</span>
      </aside>

      <aside class="viz">
        <div class="ph"><span>Visualizations</span><svg width="16" height="16" viewBox="0 0 16 16"><path d="M1 1L8 8 1 15M8 1L15 8 8 15" /></svg></div>
        <div class="bv">Build visual</div>
        <div class="modes">
          <div class="mode on"><svg width="30" height="31" viewBox="0 0 30 31"><path d="M0 1H24" stroke="#252423" stroke-width="2" /><path d="M1 8H29V16H1zM1 21.500H29V29.500H1z" fill="#117865" stroke="#222" stroke-width="1.500" stroke-dasharray="2 1" /></svg></div>
          <div class="mode m2"><svg width="28" height="29" viewBox="0 0 28 29"><path d="M1 24V12H9V1H17V16M9 12V23M17 8H24" /><path d="M5 27Q9 26 9 22 12 18 16 22 16 28 5 27zM14 19L24 8Q27 7 26 11L17 22z" fill="#f3f2f1" /></svg></div>
          <div class="mode m3"><svg width="31" height="31" viewBox="0 0 31 31"><circle cx="13.500" cy="13.500" r="12" /><path d="M2 14L8 9 14 12 23 6M6 23V17H9V24M12 25V15H15V25M18 23V13H21V21" /><path d="M22 22L29 29" stroke-width="3.500" /></svg></div>
        </div>
        <svg class="notch" width="225" height="11" viewBox="0 0 225 11"><path d="M0 10H20L30 1 40 10H225" /></svg>
        <div class="gallery">
          <div class="selbox"></div>
          <svg v-for="(g, i) in gallery" :key="i" width="23" height="23" viewBox="0 0 69 69" v-html="g"></svg>
          <svg class="marker" width="23" height="23" viewBox="48 52 69 69"><path fill-rule="evenodd" d="M246 305Q265 287 310 287 362 294 369 325V370Q362 410 340 440L337 465 322 490Q290 512 262 502L238 475 240 380zM262 372L282 361 300 352 325 353 342 368 330 385 314 400 290 413 275 437 262 425z" fill="#ffff00" /></svg>
        </div>
        <div class="more">. . .</div>
        <div class="wells">
          <div class="wl">Columns</div>
          <div class="well"><div class="chip"><span>Territory</span><svg class="cv" width="15" height="9" viewBox="0 0 15 9"><path d="M1 1L7.500 8 14 1" /></svg><svg width="11" height="11" viewBox="0 0 11 11"><path d="M0 0L11 11M11 0L0 11" /></svg></div></div>
          <div class="wl b">Drill through</div>
          <div class="sw"><span>Cross-report</span><div class="tg"><i></i>Off</div></div>
          <div class="sw s2"><span>Keep all filters</span><div class="tg on">On<i></i></div></div>
          <div class="drop">Add drill-through fields here</div>
        </div>
      </aside>

      <aside class="data">
        <div class="dt">Data</div>
        <div class="ds"><svg width="19" height="19" viewBox="0 0 19 19"><circle cx="12" cy="7" r="6" /><path d="M8 11L1 18" /></svg><span>Search</span></div>
        <svg class="arr" width="9" height="15" viewBox="0 0 9 15"><path d="M1 1L8 7.500 1 14" /></svg>
      </aside>
    </main>
  </div>
</template>

<style>
body { margin: 0; overflow: hidden; }
</style>
<style scoped>
.app { width: 1618px; height: 858px; overflow: hidden; font-family: "Open Sans", "Noto Sans", sans-serif; color: #252423; display: flex; flex-direction: column; background: #fafafa; white-space: nowrap; }
.app * { box-sizing: border-box; }
svg { display: block; overflow: visible; flex: none; }
.titlebar { height: 43px; background: #3b3a39; display: flex; flex: none; color: #fff; }
.qa { height: 37px; display: flex; align-items: center; justify-content: center; padding-top: 6px; }
.qa path { fill: none; stroke: #fff; stroke-width: 1.4; }
.save { width: 50px; padding-left: 11px; }
.undo { width: 37px; background: #252423; }
.redo { width: 36px; }
.redo path { stroke: #7d7b79; }
.doc { margin-left: 3px; width: 718px; padding-top: 5px; display: flex; align-items: center; font-size: 15px; letter-spacing: -.5px; }
.doc i { font-style: normal; width: 16px; text-align: center; }
.saved { letter-spacing: -.42px; }
.doc svg { margin: -3px 0 0 8px; }
.search { width: 500px; height: 30px; margin-top: 6px; background: #d4d4d2; border-radius: 2px; display: flex; align-items: center; padding-left: 21px; font-size: 17px; letter-spacing: -.3px; color: #2a5a50; }
.search svg { fill: none; stroke: #3b3a39; stroke-width: 1.7; margin-right: 14px; }
.tabs { height: 38px; flex: none; display: flex; font-size: 17.5px; letter-spacing: -.45px; line-height: 39px; }
.tab { display: flex; justify-content: center; position: relative; }
.active { font-weight: 600; letter-spacing: -.7px; border-bottom: 3px solid #117865; }
.ctx { background: #fff; text-align: center; font-weight: 600; color: #0d4a40; letter-spacing: -.4px; font-size: 17px; }
.drill { letter-spacing: -.15px; }
.fmt { width: 94px; margin-left: 19px; }
.drill { width: 124px; margin-left: 5px; }
.ribbon { height: 119px; flex: none; display: flex; padding: 7px 0 2px; }
.group { display: flex; flex-direction: column; border-right: 1px solid #d2d0ce; flex: none; }
.clipboard { width: 201px; }
.btns { display: flex; height: 97px; }
.btn { text-align: center; font-size: 14.3px; line-height: 20px; letter-spacing: -.25px; padding-top: 5px; flex: none; display: flex; flex-direction: column; align-items: center; }
.btn > div { margin-top: 4px; }
.btn > .l2 { margin-top: 0; display: flex; align-items: center; gap: 2px; height: 20px; }
.chev { fill: none; stroke: #252423; stroke-width: 1.7; margin-top: 3px; }
.off { color: #c8c6c4; }
.off .chev { stroke: #b0aeac; }
.paste { width: 70px; padding-right: 1px; }
.paste svg { margin-left: 6px; }
.small { font-size: 14.3px; letter-spacing: -.2px; line-height: 20px; }
.small > div { display: flex; height: 30px; align-items: center; }
.small svg { margin: 0 4px 0 -3px; }
.gname { font-size: 12.2px; letter-spacing: -.25px; line-height: 14px; text-align: center; }
.work { flex: 1; display: flex; min-height: 0; position: relative; box-shadow: 0 -1px 0 #c9c8c7; }
.rail { width: 51px; background: #f3f2f1; border-right: 1px solid #d9d8d6; flex: none; }
.ri { height: 50px; display: flex; align-items: center; justify-content: center; border-left: 3px solid transparent; padding-right: 3px; }
.ri path { fill: none; stroke: #777; stroke-width: 1.5; }
.ri.on { border-color: #117865; height: 49px; padding-top: 1px; }
.ri.on path { stroke: #252423; fill: none; stroke-width: 1.8; }
.ri.dax { padding: 2px 5px 0 0; }
.ri text { fill: #777; font-weight: 700; }
.canvas { width: 1245px; background: linear-gradient(#d8d8d8, #e5e5e5 5px); padding-top: 15px; flex: none; }
.page { height: 643px; background: #fff; position: relative; }
.tvis { position: absolute; left: 10px; top: 20px; width: 208px; height: 489px; border: 1px solid #bebebe; }
.vhead { height: 25px; background: #fafafa; display: flex; align-items: center; padding: 0 8px 2px 93px; }
.vhead svg { fill: none; stroke: #777; stroke-width: 1.4; }
.vhead .fn { margin-left: 5px; }
.vhead .fo { margin-left: 11px; }
.vhead .do { margin-left: 12px; fill: #666; stroke: none; }
.th { margin: 0 0 0 5px; width: 90px; height: 44px; padding: 3px 0 0 5px; line-height: 32px; font-weight: 700; font-size: 18.2px; letter-spacing: -.2px; border-bottom: 1px solid #4bb0c8; }
.rows { margin-left: 5px; width: 91px; }
.row { height: 32px; line-height: 35px; padding-left: 5px; font-size: 22px; letter-spacing: -.8px; color: #777; }
.alt { background: #f3f3f3; border-top: 1px solid #ebebeb; border-bottom: 1px solid #ebebeb; line-height: 33px; }
.sel { background: #d6d6d6; color: #252423; margin-left: 2px; padding-left: 1px; border-left: 2px solid #000; }
.handles { position: absolute; left: -1px; top: -1px; fill: #999; }
.mapvis { position: absolute; left: 212px; top: 77px; }
.mtitle { height: 19px; font-size: 12px; letter-spacing: -.4px; line-height: 16px; color: #bdbdbd; padding-left: 1px; }
.map { overflow: hidden; }
.ml { fill: #4b4b4b; paint-order: stroke; stroke: #fff; stroke-opacity: .65; stroke-width: 6px; stroke-linejoin: round; font-family: "Noto Sans", sans-serif; }
.ml.s { fill: #70554f; }
.ml.o { fill: #42727d; stroke: none; }
.ml.w { fill: #4169bd; stroke: none; }
.bing { fill: #666; stroke: #fff; stroke-width: 2; stroke-opacity: .6; paint-order: stroke; }
.copy { font-family: "Liberation Sans", sans-serif; font-size: 27px; fill: #111; }
.terms { fill: #1d4aa5; text-decoration: underline; stroke: #fff; stroke-width: 3; paint-order: stroke; }
.filters { width: 41px; background: #fff; border-left: 1px solid #c8c6c4; display: flex; flex-direction: column; align-items: center; padding-top: 16px; flex: none; }
.filters svg, .viz svg, .data svg { fill: none; stroke: #3b3a39; stroke-width: 1.4; }
.filters .ff { margin: 19px 0 0 5px; }
.filters span { writing-mode: vertical-rl; font-size: 17.5px; font-weight: 600; letter-spacing: .25px; margin-top: 10px; line-height: 20px; }
.viz { width: 226px; background: #f3f2f1; border-left: 1px solid #d2d0ce; flex: none; }
.ph { display: flex; align-items: center; height: 26px; margin-top: 11px; padding: 0 11px 0 10px; justify-content: space-between; font-size: 18.8px; font-weight: 600; letter-spacing: -.15px; }
.bv { font-size: 14.5px; font-weight: 500; letter-spacing: 0; line-height: 22px; margin: 10px 0 0 10px; }
.modes { display: flex; margin: 3px 0 0 10px; height: 40px; align-items: center; }
.mode.on { width: 40px; height: 40px; background: #d2d0ce; display: flex; align-items: center; justify-content: center; }
.m2 { margin-left: 50px; } .m3 { margin-left: 52px; }
.notch { margin-top: 6px; }
.viz .notch { stroke: #777; stroke-width: 1.2; }
.gallery { margin: 13px 0 0 13px; display: grid; grid-template-columns: repeat(6, 23px); gap: 12px; position: relative; }
.viz .gallery svg { stroke: none; font-family: "Open Sans", sans-serif; }
.selbox { position: absolute; left: 102px; top: 136px; width: 30px; height: 30px; background: #e1dfdd; border: 1px solid #605e5c; }
.gallery > svg { position: relative; }
.gallery > .marker { position: absolute; left: 0; top: 0; mix-blend-mode: multiply; }
.more { font-size: 15px; font-weight: 600; letter-spacing: .1px; line-height: 20px; margin: 6px 0 0 15px; height: 40px; }
.wells { border-top: 1px solid #dddbd9; padding: 10px 8px 0 5px; font-size: 14.5px; letter-spacing: -.1px; }
.wl { line-height: 22px; padding-left: 10px; }
.wl.b { font-weight: 500; margin-top: 12px; color: #3b3a39; letter-spacing: .1px; }
.well { margin-top: 5px; height: 45px; background: #fff; border: 1px dashed #c0bebc; padding: 4px 2px; }
.chip { height: 28px; background: #ebeae9; border: 1px solid #b5b3b1; border-radius: 2px; display: flex; align-items: center; padding: 0 5px 0 6px; }
.chip span { flex: 1; margin-top: -1px; }
.chip .cv { margin-right: 7px; }
.sw { display: flex; justify-content: space-between; align-items: center; height: 20px; margin-top: 10px; padding: 0 20px 0 10px; }
.sw.s2 { margin-top: 14px; }
.sw > span { letter-spacing: -.18px; margin-top: -1px; }
.tg { width: 40px; height: 20px; border-radius: 10px; border: 1px solid #777; background: #fff; font-size: 11px; line-height: 18px; display: flex; align-items: center; gap: 3px; padding-left: 5px; color: #605e5c; letter-spacing: 0; }
.tg i { width: 10px; height: 10px; border-radius: 50%; background: #605e5c; }
.tg.on { background: #117865; border-color: #117865; color: #fff; }
.tg.on i { background: #fff; }
.drop { margin-top: 13px; height: 32px; background: #fff; border: 1px dashed #c0bebc; line-height: 31px; padding-left: 10px; font-size: 14.5px; letter-spacing: -.1px; }
.data { flex: 1; min-width: 0; background: #f3f2f1; border-left: 1px solid #dddbd9; overflow: hidden; position: relative; }
.dt { font-size: 18.5px; font-weight: 600; letter-spacing: -.1px; margin: 11px 0 0 10px; line-height: 26px; }
.ds { margin: 20px 0 0 5px; width: 120px; height: 33px; border: 1px solid #777; border-radius: 2px; display: flex; align-items: center; padding-left: 9px; font-size: 14.5px; color: #555; }
.ds svg { margin-right: 8px; }
.arr { margin: 436px 0 0 38px; }
</style>
